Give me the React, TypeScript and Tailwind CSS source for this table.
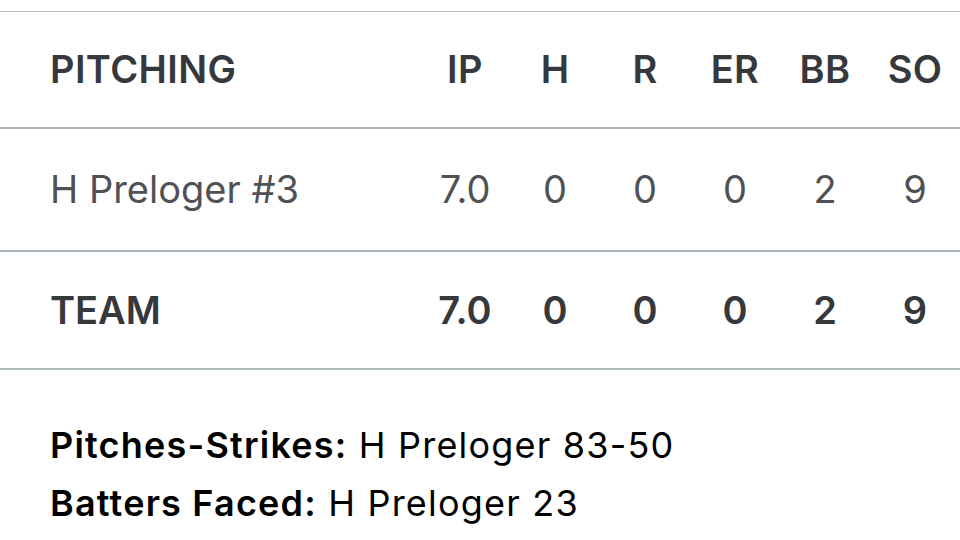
const cols = ["IP", "H", "R", "ER", "BB", "SO"];

const rows = [
  { name: "H Preloger #3", stats: ["7.0", "0", "0", "0", "2", "9"], total: false },
  { name: "TEAM", stats: ["7.0", "0", "0", "0", "2", "9"], total: true },
];

export default function App() {
  return (
    <div className="w-[960px] h-[540px] bg-white overflow-hidden font-['Inter',sans-serif]">
      <div className="h-[11px]" />
      <div className="border-t border-[#b9bec2]" />

      <div className="grid grid-cols-[420px_repeat(6,90px)] h-[117px] items-center border-b-2 border-[#a9b5bc] text-[38px] font-semibold text-[#36383c] tracking-[0.4px]">
        <div className="pl-[50px]">PITCHING</div>
        {cols.map((c) => (
          <div key={c} className="text-center">
            {c}
          </div>
        ))}
      </div>

      {rows.map((r) => (
        <div
          key={r.name}
          className={
            r.total
              ? "grid grid-cols-[420px_repeat(6,90px)] h-[118px] items-center border-b-2 border-[#b2bcc1] text-[38px] font-semibold text-[#36383c]"
              : "grid grid-cols-[420px_repeat(6,90px)] h-[123px] items-center border-b-2 border-[#a9b5bc] text-[38px] text-[#4f5155]"
          }
        >
          <div className="pl-[50px]">{r.name}</div>
          {r.stats.map((s, i) => (
            <div key={i} className="text-center">
              {s}
            </div>
          ))}
        </div>
      ))}

      <div className="pt-[46px] pl-[50px] text-[36px] leading-[58px] text-black tracking-[1.2px]">
        <div>
          <span className="font-semibold">Pitches-Strikes:</span> H Preloger 83-50
        </div>
        <div>
          <span className="font-semibold">Batters Faced:</span> H Preloger 23
        </div>
      </div>
    </div>
  );
}
